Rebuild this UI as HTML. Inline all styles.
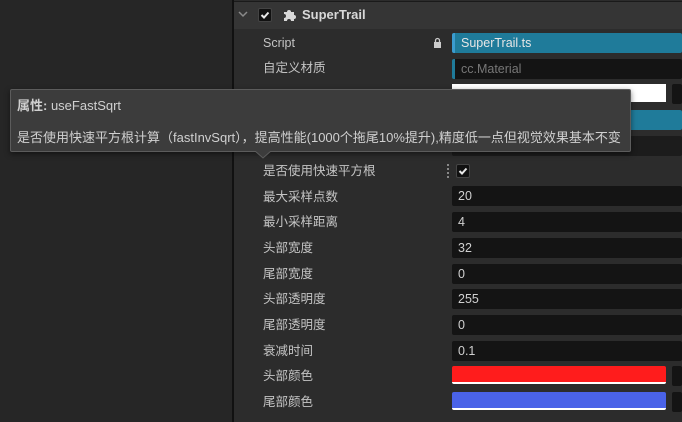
<!DOCTYPE html>
<html><head><meta charset="utf-8"><style>
*{margin:0;padding:0;box-sizing:border-box}
body{width:682px;height:422px;overflow:hidden;background:#262626;font-family:"Liberation Sans","Noto Sans CJK SC",sans-serif;font-size:12px;color:#bdbdbd;position:relative}
.abs{position:absolute}
#right{left:232px;top:0;width:450px;height:422px;background:#2c2c2c;border-left:2px solid #111}
.lbl{position:absolute;left:263px;font-size:12.5px;color:#c4c4c4;line-height:16px}
.fld{position:absolute;left:452px;width:230px;height:20px;background:#141414;border-radius:2px;color:#d0d0d0;padding-left:6px;line-height:20px;font-size:12.5px}
</style></head><body>
<div id="right" class="abs"></div>
<div class="abs" style="left:234px;top:1px;width:448px;height:28px;background:#353535;border-top:1px solid #1a1a1a"></div>
<svg class="abs" style="left:238px;top:10px" width="10" height="8"><path d="M1 2 L5 6 L9 2" stroke="#8a8a8a" stroke-width="1.5" fill="none"/></svg>
<div class="abs" style="left:258px;top:8px;width:14px;height:14px;background:#111;border:1px solid #444;border-radius:2px"></div>
<svg class="abs" style="left:259px;top:9px" width="12" height="12"><path d="M2.5 6 L5 8.5 L9.5 3.5" stroke="#e8e8e8" stroke-width="2" fill="none"/></svg>
<svg class="abs" style="left:282px;top:8px" width="14" height="14"><path d="M2 4h3a2 2 0 1 1 4 0h3v3a2 2 0 1 1 0 4v2H9a2 2 0 1 0-4 0H2v-3a2 2 0 1 0 0-4z" fill="#d8d8d8"/></svg>
<div class="abs" style="left:302px;top:7px;font-size:13px;font-weight:bold;color:#d8d8d8">SuperTrail</div>

<div class="lbl" style="top:35px">Script</div>
<svg class="abs" style="left:433px;top:37px" width="9" height="11"><rect x="1" y="5" width="7" height="6" fill="#ccc"/><path d="M2.5 5V3.5a2 2 0 0 1 4 0V5" stroke="#ccc" stroke-width="1.3" fill="none"/></svg>
<div class="fld" style="top:33px;background:#1f7b9a;border-left:3px solid #3b9ccf;color:#e6e6e6">SuperTrail.ts</div>
<div class="lbl" style="top:60px">自定义材质</div>
<div class="fld" style="top:59px;border-left:3px solid #1f7b9a;color:#777">cc.Material</div>
<div class="abs" style="left:452px;top:84px;width:214px;height:18px;background:#fff"></div>
<div class="fld" style="top:84px;left:672px;width:10px"></div>
<div class="fld" style="top:110px;background:#1f7b9a"></div>
<div class="fld" style="top:136px;background:#1c1c1c"></div>

<div class="lbl" style="top:163px">是否使用快速平方根</div>
<div class="abs" style="left:447px;top:164px;width:2px;height:14px;border-left:2px dotted #888"></div>
<div class="abs" style="left:456px;top:164px;width:14px;height:14px;background:#111;border:1px solid #444;border-radius:2px"></div>
<svg class="abs" style="left:457px;top:165px" width="12" height="12"><path d="M2.5 6 L5 8.5 L9.5 3.5" stroke="#e8e8e8" stroke-width="2" fill="none"/></svg>

<div class="lbl" style="top:189px">最大采样点数</div><div class="fld" style="top:186px">20</div>
<div class="lbl" style="top:214px">最小采样距离</div><div class="fld" style="top:212px">4</div>
<div class="lbl" style="top:240px">头部宽度</div><div class="fld" style="top:238px">32</div>
<div class="lbl" style="top:266px">尾部宽度</div><div class="fld" style="top:264px">0</div>
<div class="lbl" style="top:291px">头部透明度</div><div class="fld" style="top:289px">255</div>
<div class="lbl" style="top:317px">尾部透明度</div><div class="fld" style="top:315px">0</div>
<div class="lbl" style="top:343px">衰减时间</div><div class="fld" style="top:341px">0.1</div>
<div class="lbl" style="top:368px">头部颜色</div>
<div class="abs" style="left:452px;top:366px;width:214px;height:18px;background:#ff1c1c;border-radius:2px;border-bottom:2px solid #fff"></div>
<div class="fld" style="top:366px;left:672px;width:10px"></div>
<div class="lbl" style="top:394px">尾部颜色</div>
<div class="abs" style="left:452px;top:392px;width:214px;height:18px;background:#4a63e8;border-radius:2px;border-bottom:2px solid #fff"></div>
<div class="fld" style="top:392px;left:672px;width:10px"></div>

<div class="abs" style="left:10px;top:89px;width:621px;height:63px;background:#3c3c3c;border:1px solid #5c5c5c;border-radius:2px;box-shadow:0 2px 6px rgba(0,0,0,.5)"></div>
<svg class="abs" style="left:255px;top:151px" width="16" height="8"><path d="M0 0 L8 7 L16 0" fill="#3c3c3c" stroke="#5c5c5c"/></svg>
<div class="abs" style="left:17px;top:95px;font-size:13px;color:#d0d0d0"><b>属性:</b> useFastSqrt</div>
<div class="abs" style="left:17px;top:127px;font-size:13px;color:#d0d0d0;white-space:nowrap">是否使用快速平方根计算（fastInvSqrt），提高性能(1000个拖尾10%提升),精度低一点但视觉效果基本不变</div>
</body></html>
